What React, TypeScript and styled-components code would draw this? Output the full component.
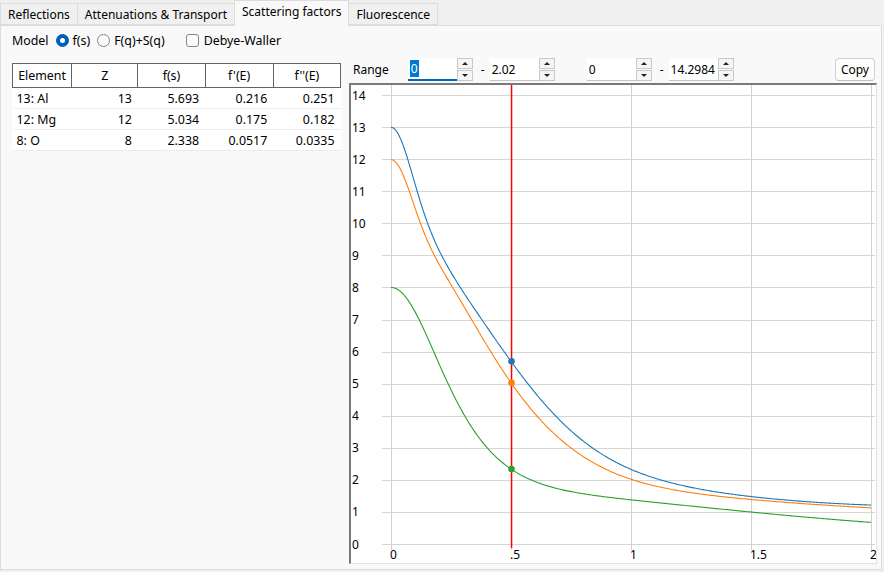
import React from "react";
import styled, { createGlobalStyle } from "styled-components";

const GlobalStyle = createGlobalStyle`
  html, body { margin: 0; padding: 0; background: #f0f0f0; }
  body { font-family: "Noto Sans", "Open Sans", sans-serif; font-size: 12px; color: #000; }
  * { box-sizing: border-box; }
`;

const Root = styled.div`
  width: 884px;
  height: 572px;
  display: flex;
  flex-direction: column;
  background: #f0f0f0;
  overflow: hidden;
`;

const TabBar = styled.div`
  display: flex;
  align-items: flex-end;
  height: 25px;
  position: relative;
  z-index: 1;
`;

const Tab = styled.div<{ $active?: boolean }>`
  height: ${(p) => (p.$active ? "26px" : "22px")};
  margin-bottom: ${(p) => (p.$active ? "-1px" : "0")};
  padding: ${(p) => (p.$active ? "0 7px 3px" : "0 7px")};
  display: flex;
  align-items: center;
  background: ${(p) => (p.$active ? "#f9f9f9" : "#f0f0f0")};
  border: 1px solid #dcdcdc;
  border-bottom: ${(p) => (p.$active ? "1px solid #f9f9f9" : "1px solid #dcdcdc")};
  margin-left: -1px;
  white-space: nowrap;
  &:first-child { margin-left: 0; }
`;

const Panel = styled.div`
  flex: 1;
  margin: 0 2px 2px 0;
  background: #f9f9f9;
  border: 1px solid #dcdcdc;
  display: flex;
  flex-direction: column;
`;

const ModelRow = styled.div`
  height: 28px;
  display: flex;
  align-items: center;
  padding-left: 11px;
  font-size: 12.4px;
`;

const Label = styled.span<{ $mr?: number }>`
  margin-right: ${(p) => p.$mr ?? 0}px;
  white-space: nowrap;
`;

const Radio = styled.span<{ $checked?: boolean }>`
  width: 13px;
  height: 13px;
  border-radius: 50%;
  margin: 1px 4px 0 0;
  background: ${(p) => (p.$checked ? "#005fb8" : "#fbfbfb")};
  border: 1px solid ${(p) => (p.$checked ? "#005fb8" : "#858585")};
  display: flex;
  align-items: center;
  justify-content: center;
  &::after {
    content: "";
    width: 5px;
    height: 5px;
    border-radius: 50%;
    background: #fff;
    display: ${(p) => (p.$checked ? "block" : "none")};
  }
`;

const Check = styled.span`
  width: 13px;
  height: 13px;
  border-radius: 3px;
  border: 1px solid #858585;
  background: #fbfbfb;
  margin: 1px 5px 0 0;
`;

const Body = styled.div`
  flex: 1;
  display: flex;
`;

const LeftPane = styled.div`
  width: 348px;
  padding: 9px 0 0 11px;
`;

const Table = styled.table`
  border-collapse: collapse;
  width: 329px;
  table-layout: fixed;
  background: #fff;
`;

const Th = styled.th<{ $w: number }>`
  width: ${(p) => p.$w}px;
  height: 24px;
  border: 1px solid #646464;
  font-weight: normal;
  text-align: center;
  padding: 0;
  font-size: 12.4px;
`;

const Td = styled.td<{ $left?: boolean }>`
  height: 21px;
  padding: ${(p) => (p.$left ? "0 0 0 4px" : "0 6px 0 0")};
  text-align: ${(p) => (p.$left ? "left" : "right")};
  border-bottom: 1px solid #ececec;
  white-space: nowrap;
  font-size: 12.4px;
`;

const RightPane = styled.div`
  display: flex;
  flex-direction: column;
  padding-top: 4px;
`;

const Toolbar = styled.div`
  height: 23px;
  display: flex;
  align-items: center;
  padding-left: 4px;
  width: 528px;
`;

const SpinWrap = styled.div`
  display: flex;
  height: 23px;
`;

const SpinInput = styled.div<{ $focused?: boolean }>`
  width: 49px;
  height: 23px;
  background: #fff;
  display: flex;
  align-items: center;
  padding-left: 2px;
  border-bottom: ${(p) => (p.$focused ? "2px solid #0067c0" : "1px solid #c4c4c4")};
`;

const Selected = styled.span`
  background: #0078d7;
  color: #fff;
  padding: 0 1px;
  line-height: 17px;
`;

const SpinButtons = styled.div`
  width: 16px;
  display: flex;
  flex-direction: column;
  gap: 1px;
`;

const SpinBtn = styled.div`
  flex: 1;
  background: #f5f5f5;
  border: 1px solid #c9c9c9;
  display: flex;
  align-items: center;
  justify-content: center;
`;

const Arrow = styled.span<{ $down?: boolean }>`
  width: 0;
  height: 0;
  border-left: 3.5px solid transparent;
  border-right: 3.5px solid transparent;
  ${(p) => (p.$down ? "border-top: 3px solid #222;" : "border-bottom: 3px solid #222;")}
`;

const Dash = styled.span`
  margin: 0 5px 0 8px;
`;

const Gap = styled.span<{ $w: number }>`
  width: ${(p) => p.$w}px;
`;

const CopyButton = styled.div`
  margin-left: auto;
  margin-right: 2px;
  height: 23px;
  padding: 0 5px;
  display: flex;
  align-items: center;
  background: #fdfdfd;
  border: 1px solid #d0d0d0;
  border-bottom-color: #c0c0c0;
  border-radius: 4px;
`;

const ChartFrame = styled.div`
  margin-top: 2px;
  width: 528px;
  height: 481px;
  background: #fff;
  border-left: 2px solid #7a7a7a;
  border-top: 2px solid #7a7a7a;
  border-right: 1px solid #e3e3e3;
  border-bottom: 1px solid #e3e3e3;
`;

const ChartSvg = styled.svg`
  display: block;
  font-family: "Noto Sans", "Open Sans", sans-serif;
  font-size: 12px;
`;

type CM = { a: number[]; b: number[]; c: number };
const ELEMENTS: { name: string; z: number; fs: string; f1: string; f2: string; color: string; cm: CM }[] = [
  {
    name: "13: Al", z: 13, fs: "5.693", f1: "0.216", f2: "0.251", color: "#1f77b4",
    cm: { a: [6.4202, 1.9002, 1.5936, 1.9646], b: [3.0387, 0.7426, 31.5472, 85.0886], c: 1.1151 },
  },
  {
    name: "12: Mg", z: 12, fs: "5.034", f1: "0.175", f2: "0.182", color: "#ff7f0e",
    cm: { a: [5.4204, 2.1735, 1.2269, 2.3073], b: [2.8275, 79.2611, 0.3808, 7.1937], c: 0.8584 },
  },
  {
    name: "8: O", z: 8, fs: "2.338", f1: "0.0517", f2: "0.0335", color: "#2ca02c",
    cm: { a: [3.0485, 2.2868, 1.5463, 0.867], b: [13.2771, 5.7011, 0.3239, 32.9089], c: 0.2508 },
  },
];

const f = (cm: CM, s: number) =>
  cm.a.reduce((acc, a, i) => acc + a * Math.exp(-cm.b[i] * s * s), cm.c);

const W = 525;
const H = 478;
const X = (s: number) => 40 + 240 * s;
const Y = (v: number) => 459 - 32.07 * v;

const Chart: React.FC = () => {
  const yTicks = Array.from({ length: 15 }, (_, i) => i);
  const xTicks: [number, string][] = [[0, "0"], [0.5, ".5"], [1, "1"], [1.5, "1.5"], [2, "2"]];
  const paths = ELEMENTS.map((el) => {
    const pts: string[] = [];
    for (let i = 0; i <= 400; i++) {
      const s = i / 200;
      pts.push(`${X(s).toFixed(2)},${Y(f(el.cm, s)).toFixed(2)}`);
    }
    return { d: "M" + pts.join("L"), color: el.color, v: f(el.cm, 0.5) };
  });
  return (
    <ChartSvg width={W} height={H} viewBox={`0 0 ${W} ${H}`}>
      {yTicks.map((i) => {
        const y = Math.round(Y(i)) + 0.5;
        return <line key={"h" + i} x1={31} x2={524} y1={y} y2={y} stroke="#d6d6d6" strokeWidth={1} />;
      })}
      {xTicks.map(([s]) => {
        const x = Math.round(X(s)) + 0.5;
        return <line key={"v" + s} x1={x} x2={x} y1={0} y2={Math.round(Y(0)) + 6} stroke="#d0d0d0" strokeWidth={1} />;
      })}
      {yTicks.map((i) => (
        <text key={"yl" + i} x={1} y={Y(i) + 4.5} fill="#000">{i}</text>
      ))}
      {xTicks.map(([s, l]) => (
        <text key={"xl" + s} x={X(s) - 1} y={473.5} fill="#000">{l}</text>
      ))}
      {paths.map((p, i) => (
        <path key={"p" + i} d={p.d} fill="none" stroke={p.color} strokeWidth={1.1} />
      ))}
      <rect x={159.8} y={0} width={1.5} height={463} fill="#ff0000" />
      {paths.map((p, i) => (
        <circle key={"c" + i} cx={160.5} cy={Y(p.v)} r={3.3} fill={p.color} />
      ))}
    </ChartSvg>
  );
};

const SpinBox: React.FC<{ value: string; focused?: boolean }> = ({ value, focused }) => (
  <SpinWrap>
    <SpinInput $focused={focused}>{focused ? <Selected>{value}</Selected> : value}</SpinInput>
    <SpinButtons>
      <SpinBtn><Arrow /></SpinBtn>
      <SpinBtn><Arrow $down /></SpinBtn>
    </SpinButtons>
  </SpinWrap>
);

const App: React.FC = () => (
  <>
    <GlobalStyle />
    <Root>
      <TabBar>
        <Tab>Reflections</Tab>
        <Tab>Attenuations &amp; Transport</Tab>
        <Tab $active>Scattering factors</Tab>
        <Tab>Fluorescence</Tab>
      </TabBar>
      <Panel>
        <ModelRow>
          <Label $mr={7}>Model</Label>
          <Radio $checked />
          <Label $mr={7}>f(s)</Label>
          <Radio />
          <Label $mr={21}>F(q)+S(q)</Label>
          <Check />
          <Label>Debye-Waller</Label>
        </ModelRow>
        <Body>
          <LeftPane>
            <Table>
              <thead>
                <tr>
                  <Th $w={59}>Element</Th>
                  <Th $w={66}>Z</Th>
                  <Th $w={67}>f(s)</Th>
                  <Th $w={68}>f'(E)</Th>
                  <Th $w={67}>f''(E)</Th>
                </tr>
              </thead>
              <tbody>
                {ELEMENTS.map((el) => (
                  <tr key={el.name}>
                    <Td $left>{el.name}</Td>
                    <Td>{el.z}</Td>
                    <Td>{el.fs}</Td>
                    <Td>{el.f1}</Td>
                    <Td>{el.f2}</Td>
                  </tr>
                ))}
              </tbody>
            </Table>
          </LeftPane>
          <RightPane>
            <Toolbar>
              <Label $mr={19}>Range</Label>
              <SpinBox value="0" focused />
              <Dash>-</Dash>
              <SpinBox value="2.02" />
              <Gap $w={32} />
              <SpinBox value="0" />
              <Dash>-</Dash>
              <SpinBox value="14.2984" />
              <CopyButton>Copy</CopyButton>
            </Toolbar>
            <ChartFrame>
              <Chart />
            </ChartFrame>
          </RightPane>
        </Body>
      </Panel>
    </Root>
  </>
);

export default App;
